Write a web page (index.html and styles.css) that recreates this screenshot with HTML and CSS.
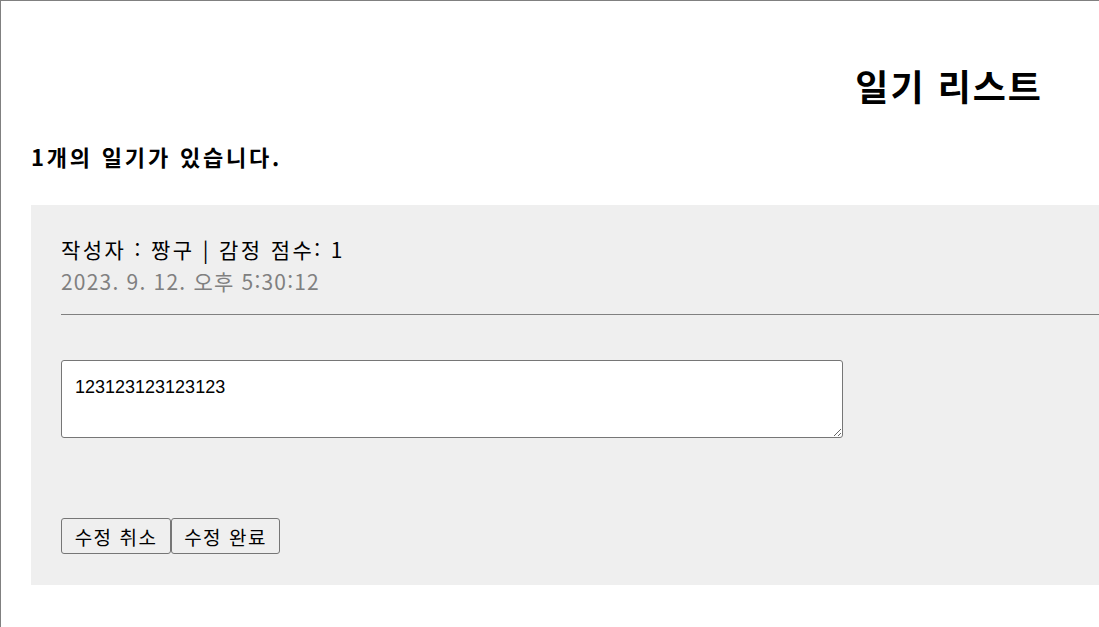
FILE: index.html
```html
<!DOCTYPE html>
<html lang="ko">
<head>
<meta charset="utf-8">
<title>일기 리스트</title>
<link rel="stylesheet" href="styles.css">
</head>
<body>
<div class="app">
  <h2 class="title">일기 리스트</h2>
  <h4 class="count">1개의 일기가 있습니다.</h4>
  <div class="list">
    <div class="item">
      <div class="info">
        <div class="author">작성자 : 짱구 | 감정 점수: 1</div>
        <div class="date">2023. 9. 12. 오후 5:30:12</div>
      </div>
      <hr class="divider">
      <div class="content">
        <textarea class="editor">123123123123123</textarea>
      </div>
      <div class="actions">
        <button class="btn">수정 취소</button><button class="btn">수정 완료</button>
      </div>
    </div>
  </div>
</div>
</body>
</html>
```
FILE: styles.css
```css
html, body {
  margin: 0;
  padding: 0;
  overflow: hidden;
  background: #fff;
}
body {
  font-family: "Noto Sans CJK KR", "Noto Sans", sans-serif;
  color: #000;
}
.app {
  width: 1300px;
  height: 700px;
  border-top: 1px solid #808080;
  border-left: 1px solid #808080;
  box-sizing: border-box;
  padding-left: 30px;
}
.title {
  width: 1012px;
  text-align: right;
  font-size: 36px;
  font-weight: 700;
  letter-spacing: 2px;
  margin: 0;
  padding-top: 58px;
  line-height: 52px;
}
.count {
  font-size: 22px;
  font-weight: 700;
  letter-spacing: 2.8px;
  margin: 30px 0 0 0;
  line-height: 30px;
}
.list {
  margin-top: 34px;
}
.item {
  background: #efefef;
  padding: 28px 30px 30px 30px;
  height: 380px;
  box-sizing: border-box;
}
.info {
  font-size: 21px;
  line-height: 32px;
}
.author {
  letter-spacing: 2.4px;
}
.date {
  color: #808080;
  letter-spacing: 1.2px;
}
.divider {
  border: none;
  border-top: 1px solid #808080;
  margin: 17px 0 0 0;
  height: 0;
}
.content {
  margin-top: 45px;
}
.editor {
  display: block;
  width: 782px;
  height: 78px;
  box-sizing: border-box;
  border: 1px solid #767676;
  border-radius: 3px;
  background: #fff;
  padding: 16px 13px 4px;
  font-family: "Liberation Sans", sans-serif;
  font-size: 18px;
  color: #000;
  resize: both;
  margin: 0;
}
.actions {
  margin-top: 80px;
  display: flex;
}
.btn {
  font-family: "Noto Sans CJK KR", sans-serif;
  font-size: 19px;
  letter-spacing: 1.5px;
  height: 36px;
  width: 110px;
  padding: 0;
  background: #efefef;
  border: 1px solid #767676;
  border-radius: 3px;
  color: #000;
  line-height: 1;
  margin: 0;
}
.btn + .btn {
  width: 109px;
}
```
